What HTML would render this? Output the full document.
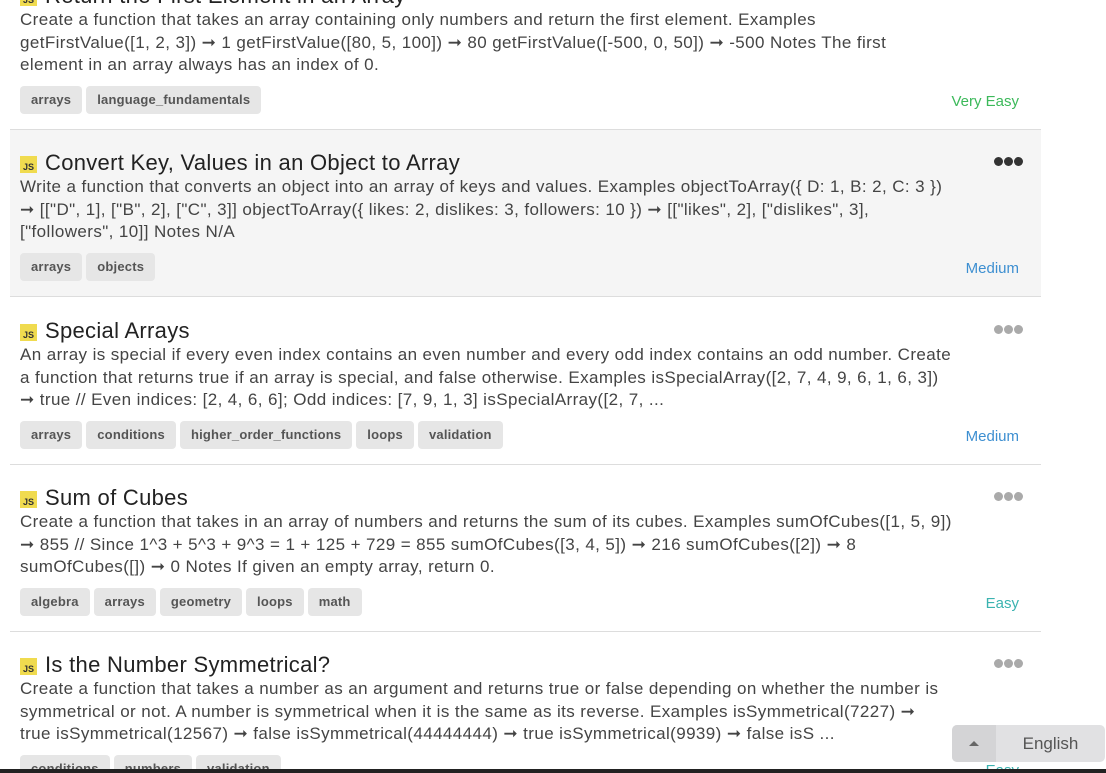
<!DOCTYPE html>
<html style="height:773px;overflow:hidden"><head><meta charset="utf-8"><style>
body{margin:0;width:1106px;height:773px;overflow:hidden;background:#fff;font-family:"Liberation Sans",sans-serif;color:#333;position:relative}
.card{position:absolute;left:10px;width:1031px;height:166px;border-bottom:1px solid #ddd}
.card.hl{background:#f5f5f5}
.t{position:absolute;left:10px;top:20px;font-size:22px;letter-spacing:0.3px;color:#222;white-space:nowrap;display:flex;align-items:center}
.js{display:inline-block;width:17px;height:17px;background:#f0db4f;font-size:9px;font-weight:bold;color:#333;text-align:center;line-height:22px;margin-right:8px;margin-top:3px;letter-spacing:0}
.d{position:absolute;left:10px;top:46px;font-size:17px;letter-spacing:0.4px;line-height:22.5px;color:#444;white-space:nowrap}
.tags{position:absolute;left:10px;top:123px;display:flex;gap:4px}
.tag{background:#e6e6e6;border-radius:4px;height:28px;line-height:28px;padding:0 11px;font-size:13px;font-weight:bold;color:#555;letter-spacing:0.2px}
.lv{position:absolute;right:22px;top:130px;font-size:15px}
.dots{position:absolute;right:18px;top:27px;display:flex;gap:1px}
.dots i{width:9px;height:9px;border-radius:50%;background:#aaa;display:block}
.hl .dots i{background:#333}
</style></head><body>
<div class="card" style="top:-37px">
<div class="t"><span class="js">JS</span>Return the First Element in an Array</div>
<div class="d">Create a function that takes an array containing only numbers and return the first element. Examples<br>getFirstValue([1, 2, 3]) ➞ 1 getFirstValue([80, 5, 100]) ➞ 80 getFirstValue([-500, 0, 50]) ➞ -500 Notes The first<br>element in an array always has an index of 0.</div>
<div class="tags"><span class="tag">arrays</span><span class="tag">language_fundamentals</span></div>
<div class="lv" style="color:#3cb95a">Very Easy</div>
</div>
<div class="card hl" style="top:130px">
<div class="t"><span class="js">JS</span>Convert Key, Values in an Object to Array</div>
<div class="dots"><i></i><i></i><i></i></div>
<div class="d">Write a function that converts an object into an array of keys and values. Examples objectToArray({ D: 1, B: 2, C: 3 })<br>➞ [["D", 1], ["B", 2], ["C", 3]] objectToArray({ likes: 2, dislikes: 3, followers: 10 }) ➞ [["likes", 2], ["dislikes", 3],<br>["followers", 10]] Notes N/A</div>
<div class="tags"><span class="tag">arrays</span><span class="tag">objects</span></div>
<div class="lv" style="color:#3d8fd1">Medium</div>
</div>
<div class="card" style="top:298px">
<div class="t"><span class="js">JS</span>Special Arrays</div>
<div class="dots"><i></i><i></i><i></i></div>
<div class="d">An array is special if every even index contains an even number and every odd index contains an odd number. Create<br>a function that returns true if an array is special, and false otherwise. Examples isSpecialArray([2, 7, 4, 9, 6, 1, 6, 3])<br>➞ true // Even indices: [2, 4, 6, 6]; Odd indices: [7, 9, 1, 3] isSpecialArray([2, 7, ...</div>
<div class="tags"><span class="tag">arrays</span><span class="tag">conditions</span><span class="tag">higher_order_functions</span><span class="tag">loops</span><span class="tag">validation</span></div>
<div class="lv" style="color:#3d8fd1">Medium</div>
</div>
<div class="card" style="top:465px">
<div class="t"><span class="js">JS</span>Sum of Cubes</div>
<div class="dots"><i></i><i></i><i></i></div>
<div class="d">Create a function that takes in an array of numbers and returns the sum of its cubes. Examples sumOfCubes([1, 5, 9])<br>➞ 855 // Since 1^3 + 5^3 + 9^3 = 1 + 125 + 729 = 855 sumOfCubes([3, 4, 5]) ➞ 216 sumOfCubes([2]) ➞ 8<br>sumOfCubes([]) ➞ 0 Notes If given an empty array, return 0.</div>
<div class="tags"><span class="tag">algebra</span><span class="tag">arrays</span><span class="tag">geometry</span><span class="tag">loops</span><span class="tag">math</span></div>
<div class="lv" style="color:#3bb3b0">Easy</div>
</div>
<div class="card" style="top:632px">
<div class="t"><span class="js">JS</span>Is the Number Symmetrical?</div>
<div class="dots"><i></i><i></i><i></i></div>
<div class="d">Create a function that takes a number as an argument and returns true or false depending on whether the number is<br>symmetrical or not. A number is symmetrical when it is the same as its reverse. Examples isSymmetrical(7227) ➞<br>true isSymmetrical(12567) ➞ false isSymmetrical(44444444) ➞ true isSymmetrical(9939) ➞ false isS ...</div>
<div class="tags"><span class="tag">conditions</span><span class="tag">numbers</span><span class="tag">validation</span></div>
<div class="lv" style="color:#3bb3b0">Easy</div>
</div>
<div style="position:absolute;left:952px;top:725px;width:153px;height:37px;background:#e1e1e3;border-radius:5px;overflow:hidden">
<div style="position:absolute;left:0;top:0;width:44px;height:37px;background:#d4d4d6"></div>
<div style="position:absolute;left:17px;top:16px;width:0;height:0;border-left:5px solid transparent;border-right:5px solid transparent;border-bottom:5px solid #666"></div>
<div style="position:absolute;left:44px;right:0;top:0;line-height:37px;text-align:center;font-size:17px;color:#555">English</div>
</div>
<div style="position:absolute;left:0;top:769px;width:1106px;height:4px;background:#222"></div>
</body></html>
